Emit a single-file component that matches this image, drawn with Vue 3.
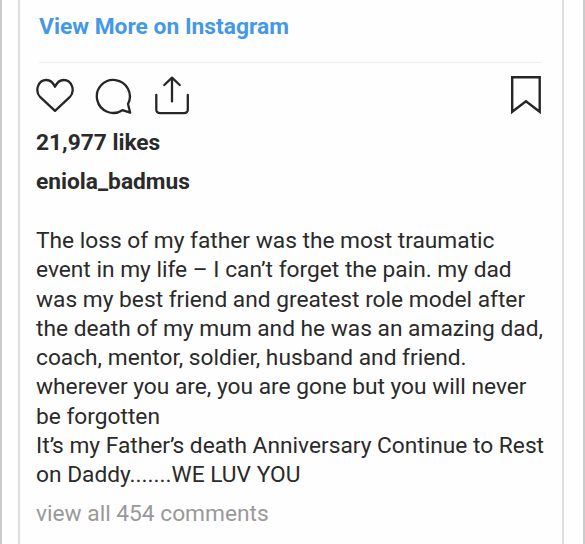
<template>
  <div class="embed-frame">
    <article class="post-card">
      <a class="view-more" href="#" @click.prevent>View More on Instagram</a>

      <!-- action icons -->
      <div class="actions">
        <button
          class="icon-btn"
          type="button"
          aria-label="Like"
          :aria-pressed="liked"
          @click="liked = !liked"
        >
          <svg class="icon-heart" :class="{ liked }" width="38" height="40" viewBox="0 0 38 40" aria-hidden="true">
            <path d="M19 34.9 4.3 21.2C-1.7 14.9 2.2 4 10.4 4c3.7 0 6.5 2.2 8.6 6.8C21.1 6.2 23.9 4 27.6 4c8.2 0 12.1 10.9 6.1 17.2Z" />
          </svg>
        </button>
        <button class="icon-btn" type="button" aria-label="Comment">
          <svg class="icon-comment" width="38" height="40" viewBox="0 0 38 40" aria-hidden="true">
            <path d="M33 28A16.5 16.5 0 1 0 27.4 34.2L35.2 36.7Z" />
          </svg>
        </button>
        <button class="icon-btn" type="button" aria-label="Share">
          <svg class="icon-share" width="36" height="40" viewBox="0 0 36 40" aria-hidden="true">
            <path d="M18 25.4V1.8M10.3 9 18 1.6 25.7 9M2.3 19v14.7a3.5 3.5 0 0 0 3.5 3.5h24.5a3.5 3.5 0 0 0 3.5-3.5V19" />
          </svg>
        </button>
        <button class="icon-btn save-btn" type="button" aria-label="Save">
          <svg class="icon-save" width="31" height="40" viewBox="0 0 31 40" aria-hidden="true">
            <path d="M1.2 1.3h27.5v34.5L15 25.2 1.2 35.8Z" />
          </svg>
        </button>
      </div>

      <div class="likes">{{ likesText }} likes</div>
      <a class="username" href="#" @click.prevent>eniola_badmus</a>

      <p class="caption">
        <span v-for="line in caption" :key="line" class="caption-line">
          <template v-for="(part, i) in line.split('’s')" :key="i"><span v-if="i > 0"><span class="apostrophe">’</span>s</span>{{ part }}</template>
        </span>
      </p>

      <a class="comments" href="#" @click.prevent>view all 454 comments</a>
    </article>
  </div>
</template>

<script setup>
import { computed, ref } from 'vue'

const liked = ref(false)
const likesText = computed(() => (21977 + (liked.value ? 1 : 0)).toLocaleString('en-US'))

const caption = [
  'The loss of my father was the most traumatic',
  'event in my life – I can’t forget the pain. my dad',
  'was my best friend and greatest role model after',
  'the death of my mum and he was an amazing dad,',
  'coach, mentor, soldier, husband and friend.',
  'wherever you are, you are gone but you will never',
  'be forgotten',
  'It’s my Father’s death Anniversary Continue to Rest',
  'on Daddy.......WE LUV YOU'
]
</script>

<style>
body {
  background: #fefefe;
}
</style>

<style scoped>
.embed-frame {
  box-sizing: border-box;
  width: 585px;
  height: 544px;
  padding: 0 19px 0 16px;
  border-left: 2px solid #cbcbcb;
  border-right: 2px solid #cbcbcb;
  background: #fefefe;
  color: #2a2a2a;
  font-family: Roboto, "Liberation Sans", sans-serif;
  font-size: 22.73px;
  overflow: hidden;
}

.post-card {
  box-sizing: border-box;
  display: flex;
  flex-direction: column;
  height: 544px;
  padding: 0 20px 0 16px;
  border-left: 2px solid #dedede;
  border-right: 2px solid #e0e0e0;
}

a {
  color: inherit;
  text-decoration: none;
}

.view-more {
  height: 49px;
  margin-left: 3px;
  padding-top: 13px;
  border-bottom: 1px solid #ededed;
  color: #4598e6;
  font-size: 22.8px;
  font-weight: 700;
  line-height: 27px;
}

/* action icons */
.actions {
  display: flex;
  align-items: flex-start;
  height: 40px;
  padding-top: 13px;
}
.icon-btn {
  padding: 0;
  border: 0;
  background: none;
  line-height: 0;
  cursor: pointer;
}
.icon-btn svg {
  fill: none;
  stroke: #262626;
  stroke-width: 2.3;
  stroke-linecap: round;
  stroke-linejoin: round;
}
.icon-btn .icon-heart.liked {
  fill: #ed4956;
  stroke: #ed4956;
}
.icon-btn + .icon-btn {
  margin-left: 21px;
}
.icon-btn + .save-btn {
  margin-left: auto;
}
.icon-btn .icon-save {
  stroke-width: 2.4;
  stroke-linejoin: miter;
}

.likes,
.username {
  font-weight: 700;
  line-height: 39px;
}
.likes {
  margin-top: 7px;
}

.caption {
  margin: 25px 0 0;
}
.caption-line {
  display: block;
  line-height: 29.25px;
  white-space: nowrap;
}
/* pulls the possessive s under the apostrophe */
.apostrophe {
  letter-spacing: -2.1px;
}

.comments {
  margin-top: 10px;
  color: #999;
  line-height: 29px;
}
</style>
